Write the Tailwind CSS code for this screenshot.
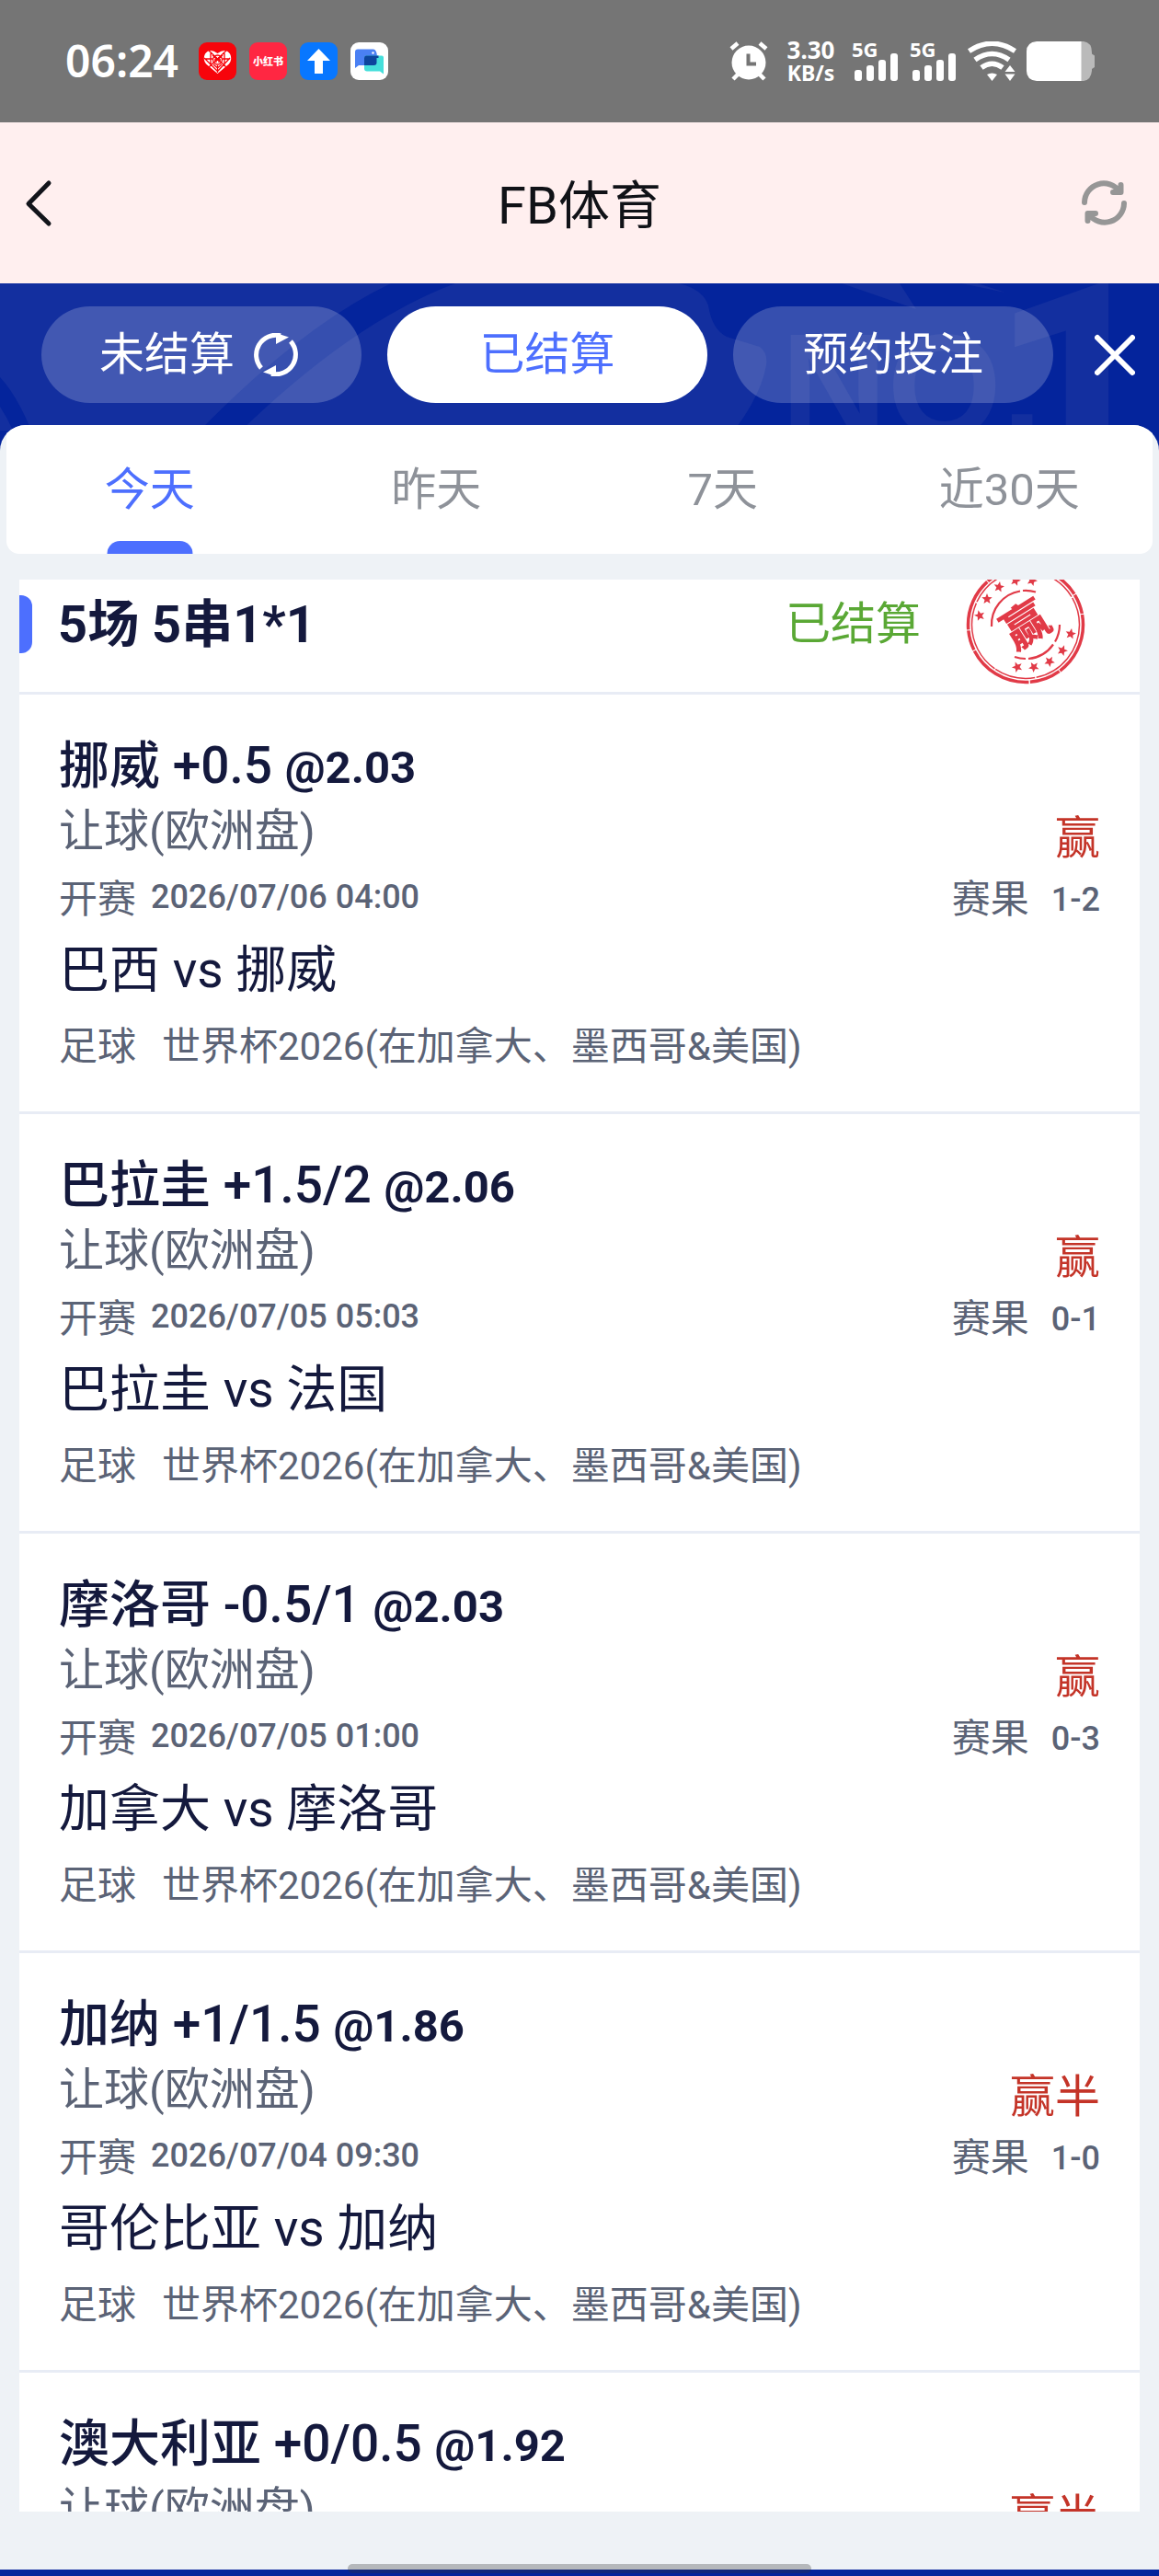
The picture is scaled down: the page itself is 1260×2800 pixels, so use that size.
<!DOCTYPE html>
<html lang="zh-CN">
<head>
<meta charset="utf-8">
<meta name="viewport" content="width=device-width, initial-scale=1">
<title>FB体育</title>
<script src="https://cdn.jsdelivr.net/npm/@tailwindcss/browser@4"></script>
</head>
<body class="flex h-screen flex-col overflow-hidden bg-[#eef2f6] font-[Roboto,'Noto_Sans_CJK_SC',sans-serif] text-[#14193d]">

<!-- Status bar -->
<div class="flex h-[133px] shrink-0 items-center justify-between bg-[#757575] pr-[69px] pb-[1px] pl-[71px] font-['Noto_Sans','Noto_Sans_CJK_SC',sans-serif] text-white">
  <div class="flex items-center gap-[14px]">
    <span class="w-[131px] text-[48px] leading-none font-semibold">06:24</span>
    <svg class="size-[41px]" viewBox="0 0 41 41"><rect width="41" height="41" rx="9" fill="#f7040b"/><path d="M20.5 34 8 23.500Q4 18 7 12.500Q12 6 20.500 12Q29 6 34 12.500Q37 18 33 23.500Z" fill="#fff"/><g stroke="#f7040b" stroke-width="1.300" fill="none"><path d="M6 17 20 31M11 9 30 27M34 17 21 31M30 9 11 27M13 10v16M28 10v16M7 18h8M26 18h8M15 14l5.500 5 5.500-5M20.500 25v8M16 24l4.500 4 4.500-4"/><circle cx="20.500" cy="19" r="5"/><path d="M19 16v6M22 16v6M17 19h7"/></g></svg>
    <svg class="size-[41px]" viewBox="0 0 41 41"><rect width="41" height="41" rx="9" fill="#ff2742"/><text x="20.500" y="25" text-anchor="middle" font-size="11" font-weight="900" fill="#fff" font-family="Noto Sans CJK SC, sans-serif">小红书</text></svg>
    <svg class="size-[41px]" viewBox="0 0 41 41"><rect width="41" height="41" rx="9" fill="#0877ff"/><path d="M20.500 7 33 20H25v14h-9V20H8Z" fill="#fff"/></svg>
    <svg class="size-[41px]" viewBox="0 0 41 41"><rect width="41" height="41" rx="9" fill="#fff"/><path d="M8 7.500H25Q29 8 29 17V23q0 2-2 2H9l-4 3V10.500q0-3 3-3Z" fill="#4a80f3"/><path d="M17 14.500H34q2 0 2 2V34.500l-4-3H18q-3 0-3-3V17q0-2.500 2-2.500Z" fill="#45dfdb"/><path d="M17 14.500H30.500V17H28.500V22q0 3-3 3H15V17q0-2.500 2-2.500Z" fill="#0d459d"/><circle cx="24.500" cy="11.500" r="1.200" fill="#fff"/></svg>
  </div>
  <div class="flex items-center">
    <svg class="h-[43px] w-[42px]" viewBox="0 0 42 43" fill="none" stroke="#fff"><ellipse cx="21" cy="23" rx="18.500" ry="18.500" fill="#fff" stroke="none"/><path d="M2 8 9 2M40 8 33 2M9 36 4 41M33 36l5 5" stroke-width="4.500"/><path d="M20.500 13.500V24.500H29" stroke="#757575" stroke-width="4"/></svg>
    <div class="ml-5 w-[53px] pt-0.5 text-center text-[26px] leading-[25px] font-bold"><div>3.30</div><div class="text-[23px]">KB/s</div></div>
    <svg class="ml-[18px] h-[43px] w-[51px] overflow-visible" viewBox="0 0 51 43" fill="#fff"><text x="0" y="17" font-size="22" font-weight="700">5G</text><rect x="3" y="31" width="8" height="12" rx="3"/><rect x="16" y="26" width="8" height="17" rx="3"/><rect x="29" y="20" width="8" height="23" rx="3"/><rect x="42" y="13" width="8" height="30" rx="3"/></svg>
    <svg class="ml-3 h-[43px] w-[51px] overflow-visible" viewBox="0 0 51 43" fill="#fff"><text x="0" y="17" font-size="22" font-weight="700">5G</text><rect x="3" y="31" width="8" height="12" rx="3"/><rect x="16" y="26" width="8" height="17" rx="3"/><rect x="29" y="20" width="8" height="23" rx="3"/><rect x="42" y="13" width="8" height="30" rx="3"/></svg>
    <svg class="ml-3 h-[43px] w-[53px]" viewBox="0 0 53 43" fill="none" stroke="#fff"><path d="M1.500 10.500Q26.500-6 51.500 10.500M8 20Q26.500 7 45 20M15 28.500Q26.500 20 38 28.500" stroke-width="5.500"/><path d="M21 36Q26.500 33 32 36L26.500 43ZM46 26 51.500 33H40.500ZM40.500 35.500H51.500L46 43Z" fill="#fff" stroke="none"/></svg>
    <svg class="ml-[11px] h-[43px] w-[75px]" viewBox="0 0 75 43"><path d="M59 0H62Q71 1 71 12V13.500L74 15.500V28L71 30V32Q70 42 62 43H59Z" fill="#bababa"/><path d="M11 0H59.500V43H11Q0 42 0 32V11Q0 1 11 0Z" fill="#fff"/></svg>
  </div>
</div>

<!-- Page header -->
<header class="flex h-[175px] shrink-0 items-center justify-between bg-[#ffefef] pr-[35px] pl-[27px]">
  <button type="button" aria-label="返回" class="w-[57px]"><svg class="h-[52px] w-[30px]" viewBox="0 0 30 52" fill="none" stroke="#12141a" stroke-width="5" stroke-linecap="round" stroke-linejoin="round"><path d="M26 4 4 26.500 26 48"/></svg></button>
  <h1 class="pt-1.5 text-[56px] leading-none text-[#101217]">FB体育</h1>
  <button type="button" aria-label="刷新"><svg class="size-[49px]" viewBox="0 0 49 49" fill="none" stroke="#969696" stroke-width="6" stroke-linecap="round" stroke-linejoin="round"><path d="M3 24A21 21 0 0 1 41 12M42.500 5V13H34M46 25A21 21 0 0 1 8 37M6.500 44V36H15"/></svg></button>
</header>

<!-- Settlement filter -->
<section class="relative h-[182px] shrink-0 overflow-hidden bg-[#04249c]">
  <svg class="absolute inset-0 size-full" viewBox="0 0 1260 182" preserveAspectRatio="none" fill="#132f9f" aria-hidden="true">
    <path d="M0 0H738Q764 6 770 24Q774 50 790 58L826 69Q835 76 833 89Q826 130 780 182H0Z"/>
    <path d="M425 0H495Q375 45 240 182H196Q320 50 425 0ZM0 102Q24 128 42 182H0V160L14 160Q8 146 0 134Z" fill="#04249c"/>
    <path d="M915 0H978L996 28ZM1045 0H1063L1093 10Z"/>
    <text x="849" y="166" font-family="Liberation Sans, sans-serif" font-weight="700" font-size="160">NO.</text>
    <text x="1076" y="233" font-family="Roboto, sans-serif" font-weight="700" font-size="330">1</text>
  </svg>
  <div class="relative flex items-center pt-[25px] pr-[26px] pl-[45px]">
    <div class="grid flex-1 grid-cols-3 gap-7 text-[49px] leading-none text-white">
      <button type="button" class="flex h-[105px] items-center justify-center gap-[21px] rounded-full bg-white/20 pr-1.5">未结算<svg class="h-[47px] w-[48px]" viewBox="0 0 48 47" fill="none" stroke="#fff" stroke-width="5"><path d="M8 38A21.500 21.500 0 0 1 29 2.800M40 9A21.500 21.500 0 0 1 19 44.200"/><path d="M24 0 38 4.500 24 12ZM24 47 10 42.500 24 35Z" fill="#fff" stroke="none"/></svg></button>
      <button type="button" class="h-[105px] rounded-full bg-white text-[#4d6ffe]">已结算</button>
      <button type="button" class="h-[105px] rounded-full bg-white/20">预约投注</button>
    </div>
    <button type="button" aria-label="关闭" class="ml-[45px]"><svg class="h-[46px] w-[44px]" viewBox="0 0 44 46" fill="none" stroke="#fff" stroke-width="6" stroke-linecap="round"><path d="M3 4 41 42M41 4 3 42"/></svg></button>
  </div>
</section>

<main class="relative -mt-7 flex min-h-0 flex-1 flex-col overflow-hidden rounded-t-[28px] bg-[#eef2f6]">
  <nav class="mx-[7px] grid h-[140px] shrink-0 grid-cols-4 rounded-b-[14px] bg-white text-[49px] leading-none text-[#8e9299]">
    <button type="button" class="relative text-[#4d6ffe]">今天<span class="absolute bottom-0 left-1/2 h-[14px] w-[93px] -translate-x-1/2 rounded-t-[14px] bg-[#4d6ffe]"></span></button>
    <button type="button">昨天</button>
    <button type="button">7天</button>
    <button type="button">近30天</button>
  </nav>

  <div class="mx-[21px] mt-7 mb-[63px] min-h-0 flex-1 overflow-hidden bg-white">
    <div class="flex h-[122px] items-start">
      <div class="flex h-[97px] flex-1 items-center">
        <span class="h-[63px] w-[14px] rounded-r-[12px] bg-[#4d6ffe]"></span>
        <h2 class="ml-7 text-[56px] leading-none font-bold">5场 5串1*1</h2>
        <span class="mr-12 ml-auto text-[49px] leading-none text-[#5aa835]">已结算</span>
        <svg class="mr-[58px] size-[132px]" viewBox="-66 -66 132 132" fill="none" stroke="#e13a47">
          <circle r="62.500" stroke-width="3.500" stroke-dasharray="58 1 34 1.500 72 1 22 1"/>
          <circle r="58.500" stroke-width="1.500" stroke-dasharray="80 1.500 45 1"/>
          <path d="M-37 2A37 37 0 0 1-6-36.500M-3-37A37 37 0 0 1 11-35.500M37 0A37 37 0 0 1 32 18.500M30 21.500A37 37 0 0 1 3 37M0 37A37 37 0 0 1-12 35" stroke-width="2.200"/>
          <g fill="#e13a47" stroke="none">
            <path d="M0-6 1.600-2 5.700-1.800 2.500 1 3.500 5 0 2.800-3.500 5-2.500 1-5.700-1.800-1.600-2Z" transform="translate(-50 -10) rotate(-15)"/>
            <path d="M0-6 1.600-2 5.700-1.800 2.500 1 3.500 5 0 2.800-3.500 5-2.500 1-5.700-1.800-1.600-2Z" transform="translate(-42 -28)"/>
            <path d="M0-6 1.600-2 5.700-1.800 2.500 1 3.500 5 0 2.800-3.500 5-2.500 1-5.700-1.800-1.600-2Z" transform="translate(-29 -41) rotate(10)"/>
            <path d="M0-6 1.600-2 5.700-1.800 2.500 1 3.500 5 0 2.800-3.500 5-2.500 1-5.700-1.800-1.600-2Z" transform="translate(-11 -48) rotate(15)"/>
            <path d="M0-6 1.600-2 5.700-1.800 2.500 1 3.500 5 0 2.800-3.500 5-2.500 1-5.700-1.800-1.600-2Z" transform="translate(7 -48) rotate(20)"/>
            <path d="M0-6 1.600-2 5.700-1.800 2.500 1 3.500 5 0 2.800-3.500 5-2.500 1-5.700-1.800-1.600-2Z" transform="translate(49 10) rotate(10)"/>
            <path d="M0-6 1.600-2 5.700-1.800 2.500 1 3.500 5 0 2.800-3.500 5-2.500 1-5.700-1.800-1.600-2Z" transform="translate(40 28) rotate(20)"/>
            <path d="M0-6 1.600-2 5.700-1.800 2.500 1 3.500 5 0 2.800-3.500 5-2.500 1-5.700-1.800-1.600-2Z" transform="translate(26 40) rotate(30)"/>
            <path d="M0-6 1.600-2 5.700-1.800 2.500 1 3.500 5 0 2.800-3.500 5-2.500 1-5.700-1.800-1.600-2Z" transform="translate(9 46) rotate(40)"/>
            <path d="M0-6 1.600-2 5.700-1.800 2.500 1 3.500 5 0 2.800-3.500 5-2.500 1-5.700-1.800-1.600-2Z" transform="translate(-9 46) rotate(50)"/>
            <text transform="rotate(-32)" x="0" y="18" text-anchor="middle" font-size="50" font-weight="900" font-family="Noto Sans CJK SC, sans-serif">赢</text>
          </g>
        </svg>
      </div>
    </div>

    <article class="h-[456px] border-t-[3px] border-[#e8ecf5] pt-10 pr-[43px] pl-[43px] text-[42px] text-[#5b6376]">
      <h3 class="text-[55px] leading-[74px] font-medium text-[#14193d]">挪威 +0.5 <b class="text-[49px] leading-none">@2.03</b></h3>
      <div class="flex items-center justify-between text-[49px] leading-[70px]"><span>让球(欧洲盘)</span><span class="pt-4 leading-[54px] text-[#c43428]">赢</span></div>
      <div class="flex items-center justify-between leading-[78px]"><div class="flex gap-4">开赛<time class="text-[36px] leading-[72px] font-medium">2026/07/06 04:00</time></div><div class="flex gap-6">赛果<span class="text-[36px] font-medium">1-2</span></div></div>
      <p class="text-[55px] leading-[74px] text-[#14193d]">巴西 vs 挪威</p>
      <p class="flex gap-7 leading-[94px]"><span>足球</span><span>世界杯2026(在加拿大、墨西哥&amp;美国)</span></p>
    </article>
    <article class="h-[456px] border-t-[3px] border-[#e8ecf5] pt-10 pr-[43px] pl-[43px] text-[42px] text-[#5b6376]">
      <h3 class="text-[55px] leading-[74px] font-medium text-[#14193d]">巴拉圭 +1.5/2 <b class="text-[49px] leading-none">@2.06</b></h3>
      <div class="flex items-center justify-between text-[49px] leading-[70px]"><span>让球(欧洲盘)</span><span class="pt-4 leading-[54px] text-[#c43428]">赢</span></div>
      <div class="flex items-center justify-between leading-[78px]"><div class="flex gap-4">开赛<time class="text-[36px] leading-[72px] font-medium">2026/07/05 05:03</time></div><div class="flex gap-6">赛果<span class="text-[36px] font-medium">0-1</span></div></div>
      <p class="text-[55px] leading-[74px] text-[#14193d]">巴拉圭 vs 法国</p>
      <p class="flex gap-7 leading-[94px]"><span>足球</span><span>世界杯2026(在加拿大、墨西哥&amp;美国)</span></p>
    </article>
    <article class="h-[456px] border-t-[3px] border-[#e8ecf5] pt-10 pr-[43px] pl-[43px] text-[42px] text-[#5b6376]">
      <h3 class="text-[55px] leading-[74px] font-medium text-[#14193d]">摩洛哥 -0.5/1 <b class="text-[49px] leading-none">@2.03</b></h3>
      <div class="flex items-center justify-between text-[49px] leading-[70px]"><span>让球(欧洲盘)</span><span class="pt-4 leading-[54px] text-[#c43428]">赢</span></div>
      <div class="flex items-center justify-between leading-[78px]"><div class="flex gap-4">开赛<time class="text-[36px] leading-[72px] font-medium">2026/07/05 01:00</time></div><div class="flex gap-6">赛果<span class="text-[36px] font-medium">0-3</span></div></div>
      <p class="text-[55px] leading-[74px] text-[#14193d]">加拿大 vs 摩洛哥</p>
      <p class="flex gap-7 leading-[94px]"><span>足球</span><span>世界杯2026(在加拿大、墨西哥&amp;美国)</span></p>
    </article>
    <article class="h-[456px] border-t-[3px] border-[#e8ecf5] pt-10 pr-[43px] pl-[43px] text-[42px] text-[#5b6376]">
      <h3 class="text-[55px] leading-[74px] font-medium text-[#14193d]">加纳 +1/1.5 <b class="text-[49px] leading-none">@1.86</b></h3>
      <div class="flex items-center justify-between text-[49px] leading-[70px]"><span>让球(欧洲盘)</span><span class="pt-4 leading-[54px] text-[#c43428]">赢半</span></div>
      <div class="flex items-center justify-between leading-[78px]"><div class="flex gap-4">开赛<time class="text-[36px] leading-[72px] font-medium">2026/07/04 09:30</time></div><div class="flex gap-6">赛果<span class="text-[36px] font-medium">1-0</span></div></div>
      <p class="text-[55px] leading-[74px] text-[#14193d]">哥伦比亚 vs 加纳</p>
      <p class="flex gap-7 leading-[94px]"><span>足球</span><span>世界杯2026(在加拿大、墨西哥&amp;美国)</span></p>
    </article>
    <article class="border-t-[3px] border-[#e8ecf5] pt-10 pr-[43px] pl-[43px] text-[42px] text-[#5b6376]">
      <h3 class="text-[55px] leading-[74px] font-medium text-[#14193d]">澳大利亚 +0/0.5 <b class="text-[49px] leading-none">@1.92</b></h3>
      <div class="flex items-center justify-between text-[49px] leading-[70px]"><span>让球(欧洲盘)</span><span class="pt-4 leading-[54px] text-[#c43428]">赢半</span></div>
    </article>
  </div>
</main>

<footer class="relative h-[7px] shrink-0 bg-[#04249c]">
  <span class="absolute bottom-[3px] left-[30%] h-[10px] w-2/5 rounded-full bg-[#333]/30"></span>
</footer>
</body>
</html>
